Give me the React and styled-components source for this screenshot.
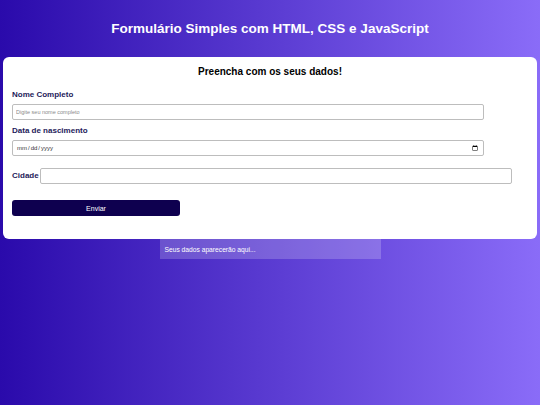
import styled, { createGlobalStyle } from "styled-components";

const GlobalStyle = createGlobalStyle`
  html, body {
    margin: 0;
    padding: 0;
    min-height: 100%;
  }
  body {
    min-height: 100vh;
    background: linear-gradient(to right, #2a0aab, #8a6cf8);
    font-family: "Liberation Sans", Arial, sans-serif;
  }
`;

export default function App() {
  return (
    <>
      <GlobalStyle />
      <Page>
        <Title>Formulário Simples com HTML, CSS e JavaScript</Title>
        <Card>
          <CardTitle>Preencha com os seus dados!</CardTitle>
          <Field>
            <Label htmlFor="nome">Nome Completo</Label>
            <Input id="nome" type="text" placeholder="Digite seu nome completo" />
          </Field>
          <Field $gap={5}>
            <Label htmlFor="nasc">Data de nascimento</Label>
            <Input id="nasc" type="date" />
          </Field>
          <InlineField>
            <Label htmlFor="cidade">Cidade</Label>
            <Input id="cidade" type="text" />
          </InlineField>
          <SubmitButton type="button">Enviar</SubmitButton>
        </Card>
        <Output>Seus dados aparecerão aqui...</Output>
      </Page>
    </>
  );
}

const Page = styled.div`
  display: flex;
  flex-direction: column;
  align-items: center;
  padding-top: 19px;
`;

const Title = styled.h1`
  margin: 0 0 19px;
  font-size: 13.5px;
  line-height: 19px;
  font-weight: bold;
  color: #ffffff;
  text-align: center;
`;

const Card = styled.form`
  align-self: stretch;
  margin: 0 3px;
  padding: 9px 9px 23px;
  background: #ffffff;
  border-radius: 6px;
  display: flex;
  flex-direction: column;
  align-items: flex-start;
`;

const CardTitle = styled.h2`
  align-self: stretch;
  margin: 0;
  font-size: 10px;
  line-height: 12px;
  font-weight: bold;
  color: #000000;
  text-align: center;
`;

const Field = styled.div`
  display: flex;
  flex-direction: column;
  gap: 3px;
  margin-top: ${(p) => p.$gap ?? 11}px;
`;

const InlineField = styled.div`
  display: flex;
  align-items: center;
  gap: 1px;
  margin-top: 12px;
`;

const Label = styled.label`
  font-size: 8px;
  line-height: 12px;
  font-weight: bold;
  color: #1e1a5a;
`;

const Input = styled.input`
  box-sizing: border-box;
  width: 472px;
  height: 16px;
  padding: 0 3px;
  border: 1px solid #bdbdbd;
  border-radius: 2px;
  font-family: "Liberation Sans", Arial, sans-serif;
  font-size: 5.5px;
  color: #333333;
  outline: none;

  &::placeholder {
    color: #8a8a8a;
  }

  &[type="date"] {
    font-size: 6px;
  }
`;

const SubmitButton = styled.button`
  box-sizing: border-box;
  width: 168px;
  height: 16px;
  margin-top: 16px;
  border: none;
  border-radius: 3px;
  background: #0e004f;
  color: #ffffff;
  font-family: "Liberation Sans", Arial, sans-serif;
  font-size: 7px;
  cursor: pointer;
`;

const Output = styled.div`
  box-sizing: border-box;
  width: 221px;
  height: 20px;
  padding: 0 5px;
  display: flex;
  align-items: center;
  background: rgba(255, 255, 255, 0.2);
  color: #ffffff;
  font-size: 6.7px;
`;
